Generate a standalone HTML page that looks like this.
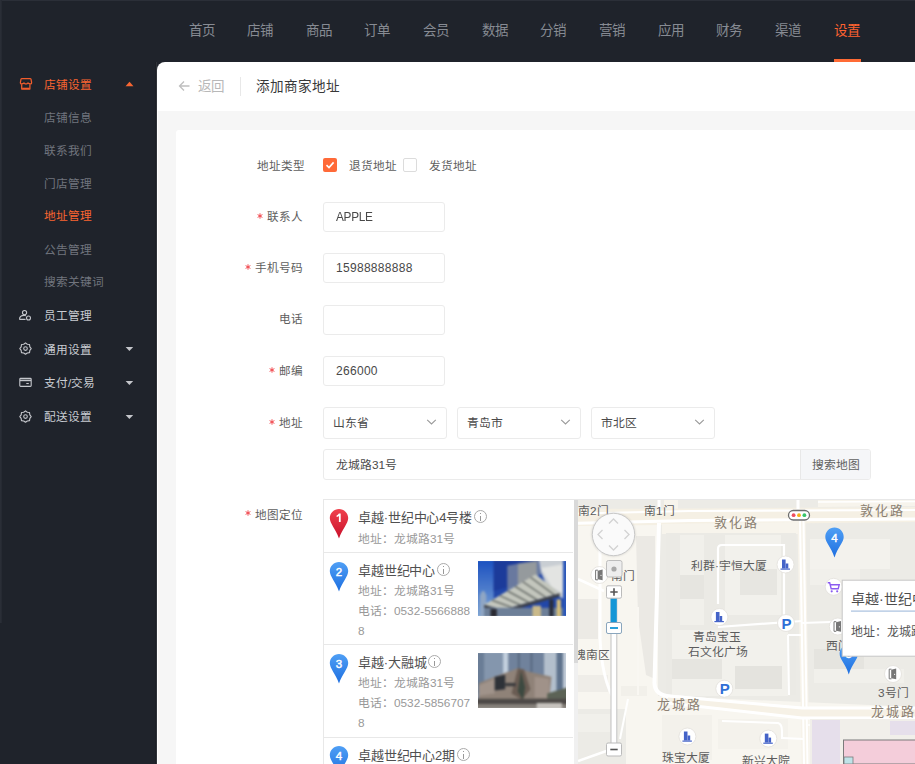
<!DOCTYPE html>
<html lang="zh-CN"><head><meta charset="utf-8">
<style>
*{margin:0;padding:0;box-sizing:border-box}
html,body{width:915px;height:764px;overflow:hidden;background:#1f232b;font-family:"Liberation Sans",sans-serif;}
.abs{position:absolute}
#top{position:absolute;left:0;top:0;width:915px;height:62px;background:#1f232b}
.nav{position:absolute;top:22px;font-size:13.5px;line-height:18px;color:#878b93;white-space:nowrap}
.nav.on{color:#fd6230;font-weight:500}
#ul{position:absolute;left:834px;top:59px;width:27px;height:3px;background:#ff6b35}

.m{position:absolute;left:44px;font-size:11.7px;line-height:16px;white-space:nowrap}
.m1{color:#c9ccd2}
.m2{color:#71757e}
.on2{color:#fa6531;font-weight:500}
#panel{position:absolute;left:157px;top:62px;width:760px;height:710px;background:#fff;border-top-left-radius:8px;overflow:hidden}
#gray{position:absolute;left:1px;top:49px;width:760px;height:700px;background:#f6f6f6}
#card{position:absolute;left:19px;top:68px;width:760px;height:700px;background:#fff}
.lbl{position:absolute;font-size:11.6px;line-height:16px;color:#5e5e5e;margin-top:1px;white-space:nowrap;text-align:right}
.req{display:inline-block;margin-right:4px;vertical-align:2.5px}
.inp{position:absolute;left:323px;width:122px;height:30px;border:1px solid #ebebeb;border-radius:3px;background:#fff;font-size:12px;letter-spacing:0.3px;color:#484848;padding-left:12px;line-height:29px}
.sel{position:absolute;top:407px;width:124px;height:32px;border:1px solid #ebebeb;border-radius:3px;background:#fff;font-size:11.8px;color:#4a4a4a;padding-left:9px;line-height:31px}
.t1{position:absolute;left:358px;font-size:13px;line-height:18px;color:#505050;letter-spacing:-0.15px;white-space:nowrap}
.t2{position:absolute;left:358px;font-size:11.8px;line-height:18px;color:#999;white-space:nowrap}
.info{display:inline-block;width:13px;height:13px;border:1px solid #aaa;border-radius:50%;margin-left:2px;vertical-align:-1px;position:relative;font-style:normal}
.info:before{content:"";position:absolute;left:5px;top:2px;width:1px;height:1.2px;background:#999}
.info:after{content:"";position:absolute;left:5px;top:4.5px;width:1px;height:5px;background:#999}
</style></head><body>
<div id="top"></div>
<div class="abs" style="left:0;top:0;width:915px;height:1px;background:#2b2f38"></div>
<div class="abs" style="left:0;top:0;width:2px;height:623px;background:linear-gradient(90deg,#2c3039,#242830)"></div>
<div class="nav" style="left:189px">首页</div>
<div class="nav" style="left:247px">店铺</div>
<div class="nav" style="left:306px">商品</div>
<div class="nav" style="left:364px">订单</div>
<div class="nav" style="left:423px">会员</div>
<div class="nav" style="left:482px">数据</div>
<div class="nav" style="left:540px">分销</div>
<div class="nav" style="left:599px">营销</div>
<div class="nav" style="left:658px">应用</div>
<div class="nav" style="left:716px">财务</div>
<div class="nav" style="left:775px">渠道</div>
<div class="nav on" style="left:834px">设置</div>
<div id="ul"></div>

<div class="m on2" style="top:77px">店铺设置</div>
<div class="m m2" style="top:109.5px">店铺信息</div>
<div class="m m2" style="top:142.5px">联系我们</div>
<div class="m m2" style="top:175.5px">门店管理</div>
<div class="m on2" style="top:208px">地址管理</div>
<div class="m m2" style="top:241.5px">公告管理</div>
<div class="m m2" style="top:274px">搜索关键词</div>
<div class="m m1" style="top:308px">员工管理</div>
<div class="m m1" style="top:342px">通用设置</div>
<div class="m m1" style="top:375px">支付/交易</div>
<div class="m m1" style="top:409px">配送设置</div>


<!-- sidebar icons -->
<svg class="abs" style="left:16px;top:74px" width="20" height="19" viewBox="0 0 20 19" fill="none" stroke="#f35d2c" stroke-width="1.25" stroke-linejoin="round">
<path d="M6 4.5 H14 Q14.8 4.5 15 5.2 L15.6 8.4 Q15.7 9.9 14.4 9.9 Q13 9.9 12 9 L11.2 9.6 Q10 10.3 8.8 9.6 L8 9 Q7 9.9 5.6 9.9 Q4.3 9.9 4.4 8.4 L5 5.2 Q5.2 4.5 6 4.5Z"/>
<path d="M5.7 10.3 V15 H13.9 V10.3"/><path d="M6.2 14.4 H13.4" stroke-width="1.4"/>
</svg>
<svg class="abs" style="left:124px;top:81px" width="11" height="7" viewBox="0 0 11 7"><path d="M1.5 5.3 L5.5 0.8 L9.5 5.3Z" fill="#f76632"/></svg>
<svg class="abs" style="left:15px;top:305px" width="22" height="20" viewBox="0 0 22 20" fill="none" stroke="#c4c6cb" stroke-width="1.1">
<circle cx="9.55" cy="7.6" r="2.1"/><path d="M4.5 14.4 H10.6 M4.5 14.4 C4.5 12 6.4 10.4 9.2 10.4 C9.8 10.4 10.4 10.5 10.9 10.7"/><circle cx="13.5" cy="13" r="2"/>
</svg>
<svg class="abs" style="left:15px;top:338px" width="22" height="20" viewBox="0 0 22 20" fill="none" stroke="#c4c6cb" stroke-width="1.1" stroke-linejoin="round">
<path d="M10.50 4.90 L12.30 6.26 L14.53 6.57 L14.84 8.80 L16.20 10.60 L14.84 12.40 L14.53 14.63 L12.30 14.94 L10.50 16.30 L8.70 14.94 L6.47 14.63 L6.16 12.40 L4.80 10.60 L6.16 8.80 L6.47 6.57 L8.70 6.26Z"/><circle cx="10.5" cy="10.6" r="1.8"/>
</svg>
<svg class="abs" style="left:15px;top:372px" width="22" height="20" viewBox="0 0 22 20" fill="none" stroke="#c4c6cb" stroke-width="1.1">
<rect x="4.8" y="6.4" width="11.4" height="8" rx="0.8"/><path d="M5 8.4 H16" stroke-width="1.6"/><path d="M11.3 11.5 H13.8"/>
</svg>
<svg class="abs" style="left:15px;top:406px" width="22" height="20" viewBox="0 0 22 20" fill="none" stroke="#c4c6cb" stroke-width="1.1" stroke-linejoin="round">
<path d="M10.50 4.90 L12.30 6.26 L14.53 6.57 L14.84 8.80 L16.20 10.60 L14.84 12.40 L14.53 14.63 L12.30 14.94 L10.50 16.30 L8.70 14.94 L6.47 14.63 L6.16 12.40 L4.80 10.60 L6.16 8.80 L6.47 6.57 L8.70 6.26Z"/><circle cx="10.5" cy="10.6" r="1.8"/>
</svg>
<svg class="abs" style="left:124px;top:346px" width="10" height="6" viewBox="0 0 10 6"><path d="M1.6 0.9 H9.2 L5.4 5.1Z" fill="#c4c6cb"/></svg>
<svg class="abs" style="left:124px;top:380px" width="10" height="6" viewBox="0 0 10 6"><path d="M1.6 0.9 H9.2 L5.4 5.1Z" fill="#c4c6cb"/></svg>
<svg class="abs" style="left:124px;top:414px" width="10" height="6" viewBox="0 0 10 6"><path d="M1.6 0.9 H9.2 L5.4 5.1Z" fill="#c4c6cb"/></svg>
<div class="abs" style="left:155px;top:62px;width:2px;height:702px;background:linear-gradient(90deg,#12151b,#3a3d44)"></div>
<div id="panel">
  <div id="gray"></div>
</div>
<div class="abs" style="left:176px;top:130px;width:739px;height:634px;background:#fff;border-top-left-radius:3px"></div>


<!-- page header -->
<svg class="abs" style="left:177px;top:79px" width="14" height="14" viewBox="0 0 14 14"><path d="M12.5 7H2.5M7 2.5L2.5 7L7 11.5" fill="none" stroke="#bfbfbf" stroke-width="1.3"/></svg>
<div class="abs" style="left:198px;top:78px;font-size:13.5px;line-height:18px;color:#b8b8b8">返回</div>
<div class="abs" style="left:240px;top:77px;width:1px;height:19px;background:#e8e8e8"></div>
<div class="abs" style="left:256px;top:78px;font-size:13.6px;line-height:18px;color:#383838">添加商家地址</div>

<!-- form -->
<div class="lbl" style="left:257px;top:157px">地址类型</div>
<div class="abs" style="left:323px;top:158px;width:14px;height:14px;background:#ff6a38;border-radius:2px"></div>
<svg class="abs" style="left:323px;top:158px" width="14" height="14" viewBox="0 0 14 14"><path d="M3.5 7.2L6 9.6L10.6 4.4" fill="none" stroke="#fff" stroke-width="1.6"/></svg>
<div class="lbl" style="left:349px;top:157px">退货地址</div>
<div class="abs" style="left:403px;top:158px;width:14px;height:14px;border:1px solid #dcdcdc;border-radius:2px;background:#fff"></div>
<div class="lbl" style="left:429px;top:157px">发货地址</div>

<div class="lbl" style="right:612px;top:208px"><svg class="req" width="6" height="6" viewBox="0 0 6 6"><path d="M3 0.3V5.7M0.6 1.6L5.4 4.4M0.6 4.4L5.4 1.6" stroke="#f0434a" stroke-width="0.95"/></svg>联系人</div>
<div class="inp" style="top:202px"><span style="display:inline-block;font-size:12.3px;letter-spacing:-0.3px;transform:scaleX(0.96);transform-origin:0 50%">APPLE</span></div>
<div class="lbl" style="right:612px;top:259px"><svg class="req" width="6" height="6" viewBox="0 0 6 6"><path d="M3 0.3V5.7M0.6 1.6L5.4 4.4M0.6 4.4L5.4 1.6" stroke="#f0434a" stroke-width="0.95"/></svg>手机号码</div>
<div class="inp" style="top:253px">15988888888</div>
<div class="lbl" style="right:612px;top:310px">电话</div>
<div class="inp" style="top:305px"></div>
<div class="lbl" style="right:612px;top:362px"><svg class="req" width="6" height="6" viewBox="0 0 6 6"><path d="M3 0.3V5.7M0.6 1.6L5.4 4.4M0.6 4.4L5.4 1.6" stroke="#f0434a" stroke-width="0.95"/></svg>邮编</div>
<div class="inp" style="top:356px">266000</div>
<div class="lbl" style="right:612px;top:414px"><svg class="req" width="6" height="6" viewBox="0 0 6 6"><path d="M3 0.3V5.7M0.6 1.6L5.4 4.4M0.6 4.4L5.4 1.6" stroke="#f0434a" stroke-width="0.95"/></svg>地址</div>
<div class="sel" style="left:323px">山东省</div>
<div class="sel" style="left:457px">青岛市</div>
<div class="sel" style="left:591px">市北区</div>
<svg class="abs" style="left:426px;top:418px" width="11" height="8" viewBox="0 0 11 8"><path d="M1.2 1.8L5.5 6L9.8 1.8" fill="none" stroke="#9a9a9a" stroke-width="1.1"/></svg>
<svg class="abs" style="left:560px;top:418px" width="11" height="8" viewBox="0 0 11 8"><path d="M1.2 1.8L5.5 6L9.8 1.8" fill="none" stroke="#9a9a9a" stroke-width="1.1"/></svg>
<svg class="abs" style="left:694px;top:418px" width="11" height="8" viewBox="0 0 11 8"><path d="M1.2 1.8L5.5 6L9.8 1.8" fill="none" stroke="#9a9a9a" stroke-width="1.1"/></svg>
<div class="abs" style="left:323px;top:449px;width:548px;height:31px;border:1px solid #ebebeb;border-radius:3px;background:#fff;overflow:hidden">
  <div class="abs" style="left:12px;top:0;font-size:11.8px;line-height:30px;color:#4a4a4a">龙城路31号</div>
  <div class="abs" style="left:476px;top:0;width:71px;height:29px;background:#f5f6f8;border-left:1px solid #e8e8e8;font-size:11.8px;line-height:30px;color:#606060;text-align:center">搜索地图</div>
</div>
<div class="lbl" style="right:612px;top:505.5px"><svg class="req" width="6" height="6" viewBox="0 0 6 6"><path d="M3 0.3V5.7M0.6 1.6L5.4 4.4M0.6 4.4L5.4 1.6" stroke="#f0434a" stroke-width="0.95"/></svg>地图定位</div>

<!-- map list -->
<div class="abs" style="left:323px;top:499px;width:592px;height:265px;border-top:1px solid #e8e8e8;border-left:1px solid #e8e8e8;background:#fff;overflow:hidden">
</div>
<div class="abs" style="left:324px;top:552px;width:249px;height:1px;background:#e8e8e8"></div>
<div class="abs" style="left:324px;top:644px;width:249px;height:1px;background:#e8e8e8"></div>
<div class="abs" style="left:324px;top:737px;width:249px;height:1px;background:#e8e8e8"></div>
<div class="abs" style="left:574px;top:500px;width:4px;height:264px;background:#f0f0f0"></div>
<div class="abs" style="left:574px;top:500px;width:4px;height:163px;background:#d9d9d9"></div>
<svg class="abs" style="left:328px;top:508px" width="22" height="32" viewBox="0 0 22 32">
<defs><linearGradient id="gr" x1="0" y1="0" x2="0" y2="1"><stop offset="0" stop-color="#f0414d"/><stop offset="1" stop-color="#c8102a"/></linearGradient>
<linearGradient id="gb" x1="0" y1="0" x2="0" y2="1"><stop offset="0" stop-color="#4f9ff5"/><stop offset="1" stop-color="#1e6fe0"/></linearGradient></defs>
<path d="M11 1C6 1 1.8 5 1.8 10C1.8 15.6 7.6 20.6 11 30.6C14.4 20.6 20.2 15.6 20.2 10C20.2 5 16 1 11 1Z" fill="url(#gr)"/>
<path d="M10.9 5.6 H12.7 V14 H10.9 V8 Q9.8 8.9 8.6 9.1 V7.5 Q10 7 10.9 5.6Z" fill="#fff"/></svg>
<svg class="abs" style="left:328px;top:561px" width="22" height="32" viewBox="0 0 22 32">
<path d="M11 1C6 1 1.8 5 1.8 10C1.8 15.6 7.6 20.6 11 30.6C14.4 20.6 20.2 15.6 20.2 10C20.2 5 16 1 11 1Z" fill="url(#gb)"/>
<text x="11" y="14.6" text-anchor="middle" font-size="11.5" fill="#fff" stroke="#fff" stroke-width="0.45" font-family="Liberation Sans">2</text></svg>
<svg class="abs" style="left:328px;top:653px" width="22" height="32" viewBox="0 0 22 32">
<path d="M11 1C6 1 1.8 5 1.8 10C1.8 15.6 7.6 20.6 11 30.6C14.4 20.6 20.2 15.6 20.2 10C20.2 5 16 1 11 1Z" fill="url(#gb)"/>
<text x="11" y="14.6" text-anchor="middle" font-size="11.5" fill="#fff" stroke="#fff" stroke-width="0.45" font-family="Liberation Sans">3</text></svg>
<svg class="abs" style="left:328px;top:745px" width="22" height="32" viewBox="0 0 22 32">
<path d="M11 1C6 1 1.8 5 1.8 10C1.8 15.6 7.6 20.6 11 30.6C14.4 20.6 20.2 15.6 20.2 10C20.2 5 16 1 11 1Z" fill="url(#gb)"/>
<text x="11" y="14.6" text-anchor="middle" font-size="11.5" fill="#fff" stroke="#fff" stroke-width="0.45" font-family="Liberation Sans">4</text></svg>

<div class="t1" style="top:509px">卓越·世纪中心4号楼<i class="info"></i></div>
<div class="t2" style="top:529.7px">地址：龙城路31号</div>
<div class="t1" style="top:562px">卓越世纪中心<i class="info"></i></div>
<div class="t2" style="top:581.7px">地址：龙城路31号</div>
<div class="t2" style="top:601.7px">电话：0532-5566888</div>
<div class="t2" style="top:621.7px">8</div>
<div class="t1" style="top:654px">卓越·大融城<i class="info"></i></div>
<div class="t2" style="top:673.7px">地址：龙城路31号</div>
<div class="t2" style="top:693.7px">电话：0532-5856707</div>
<div class="t2" style="top:713.7px">8</div>
<div class="t1" style="top:747px">卓越世纪中心2期<i class="info"></i></div>
<div id="img1" class="abs" style="left:478px;top:561px;width:88px;height:55px;overflow:hidden"><div style="filter:blur(0.8px);transform:scale(1.05);transform-origin:50% 50%"><svg width="88" height="55" viewBox="0 0 88 55">
<defs><linearGradient id="sky1" x1="0" y1="0" x2="0" y2="1"><stop offset="0" stop-color="#1a50c0"/><stop offset="1" stop-color="#7ea6d6"/></linearGradient>
<filter id="bl1"><feGaussianBlur stdDeviation="0.7"/></filter></defs>
<g filter="url(#bl1)">
<rect width="88" height="55" fill="#2447a8"/>
<rect x="0" y="0" width="17" height="55" fill="url(#sky1)"/>
<path d="M4 55 L4 34 L6 30 L8 30 L10 34 L10 55Z" fill="#8fa6c4"/>
<path d="M17 0 L60 0 L55 20 L17 30Z" fill="#1c3a9a"/>
<path d="M30 6 L60 0 L62 14 L30 30Z" fill="#7d8aa0" opacity="0.8"/><path d="M40 4 L58 2 L58 16 L40 24Z" fill="#a8a89c" opacity="0.7"/>
<path d="M60 0 L88 0 L88 40 L70 30 L62 12Z" fill="#c9ced3"/>
<path d="M62 8 L86 4 L86 34 L72 26Z" fill="#e3e4e2"/>
<path d="M83 0 L88 0 L88 55 L83 55Z" fill="#2a56b8"/>
<path d="M8 43 L57 14 L80 32 L26 48Z" fill="#c3c6bd"/>
<g stroke="#5f6460" stroke-width="1.2"><path d="M15.3 38.6 L34.1 45.6"/><path d="M22.7 34.3 L42.2 43.2"/><path d="M30.1 29.9 L50.3 40.8"/><path d="M37.4 25.6 L58.4 38.4"/><path d="M44.8 21.2 L66.5 36.0"/><path d="M52.1 16.9 L74.6 33.6"/></g>
<path d="M8 43 L26 48 L80 32 L80 35 L26 51 L8 46Z" fill="#3d3f45"/>
<rect x="8" y="46" width="75" height="9" fill="#6d7f98"/>
<rect x="14" y="47" width="6" height="8" fill="#2b2b30"/>
<rect x="54" y="44" width="8" height="11" fill="#c9b98a"/>
<rect x="70" y="38" width="4" height="17" fill="#2a2f3a"/>
<rect x="77" y="38" width="4" height="17" fill="#d7c07a"/>
</g></svg></div></div>
<div id="img2" class="abs" style="left:478px;top:653px;width:88px;height:55px;overflow:hidden"><div style="filter:blur(0.8px);transform:scale(1.05);transform-origin:50% 50%"><svg width="88" height="55" viewBox="0 0 88 55">
<defs><filter id="bl2"><feGaussianBlur stdDeviation="0.6"/></filter></defs>
<g filter="url(#bl2)">
<rect width="88" height="55" fill="#7e8ea3"/>
<rect x="0" y="0" width="8" height="40" fill="#6a7d96"/>
<rect x="8" y="0" width="18" height="30" fill="#8496ad"/>
<rect x="26" y="0" width="5" height="24" fill="#c3d0de"/>
<rect x="31" y="0" width="34" height="22" fill="#6f829c"/>
<rect x="40" y="0" width="2" height="20" fill="#5a6b82"/>
<rect x="52" y="0" width="2" height="20" fill="#5a6b82"/>
<rect x="65" y="0" width="12" height="42" fill="#b3bfcc"/>
<rect x="77" y="0" width="6" height="40" fill="#5f738d"/>
<rect x="83" y="0" width="5" height="40" fill="#c0cad6"/>
<path d="M3 30 L18 24 L40 16 L50 19 L72 24 L70 46 L3 48Z" fill="#8f8278"/>
<path d="M3 32 L18 26 L18 40 L3 42Z" fill="#a0938a"/>
<path d="M18 24 L28 22 L28 36 L18 37Z" fill="#2f3038"/>
<path d="M40 16 L46 17 L52 36 L44 46 L34 40Z" fill="#6a5c52"/>
<path d="M43 18 L47 34 L45 46 L40 38Z" fill="#3e4a40"/>
<path d="M56 24 L70 26 L70 44 L56 44Z" fill="#a09289"/>
<rect x="28" y="30" width="10" height="3" fill="#3a3a3e"/>
<path d="M68 40 L88 34 L88 50 L68 50Z" fill="#5c6356"/>
<rect x="0" y="45" width="88" height="6" fill="#4d4a47"/>
<rect x="0" y="50" width="88" height="5" fill="#85807a"/>
<rect x="58" y="49" width="24" height="6" fill="#c6c2bd"/>
</g></svg></div></div>
<div id="map" class="abs" style="left:578px;top:500px;width:337px;height:264px;overflow:hidden;background:#f3f1ec"><div style="position:absolute;left:0;top:-1px"><svg width="337" height="265" viewBox="0 0 337 265" font-family="Liberation Sans, sans-serif">
<defs><linearGradient id="mb" x1="0" y1="0" x2="0" y2="1"><stop offset="0" stop-color="#4f9ff5"/><stop offset="1" stop-color="#1e6fe0"/></linearGradient><filter id="sh" x="-20%" y="-20%" width="140%" height="140%"><feGaussianBlur stdDeviation="0.8"/></filter></defs><!-- base -->
<rect width="337" height="265" fill="#ecebe6"/>
<!-- cream areas -->
<path d="M0 22 L80 20 L80 265 L0 265Z" fill="#f8f6f0"/>
<path d="M60 196 L337 208 L337 265 L60 265Z" fill="#f8f6f0"/>
<!-- gray tapered block left of road -->
<path d="M58 37 L77 37 L77 180 L68 176 L60 120Z" fill="#ebe9e4"/>

<path d="M0 100 L20 100 L20 140 L0 140Z" fill="#eceae5"/>
<path d="M0 210 L48 210 L48 265 L0 265Z" fill="#ecebe6"/><rect x="0" y="215" width="32" height="18" fill="#f1f0eb"/><rect x="43" y="187" width="26" height="10" fill="#f2f0ea"/><rect x="0" y="176" width="30" height="17" fill="#efede8"/>

<!-- top block -->
<rect x="0" y="0" width="337" height="12" fill="#ecebe6"/>
<rect x="86" y="0" width="14" height="10" fill="#f7f4ec"/>
<path d="M240 0 L337 0 L337 7 L240 8Z" fill="#f7f4ec"/>
<!-- 敦化路 band -->
<path d="M0 10 L112 9.5 L337 8 L337 23 L0 27Z" fill="#f5f0e4"/>
<path d="M0 14.5 L112 12 L337 11" fill="none" stroke="#fff" stroke-width="2.2"/>
<path d="M0 24.3 L112 21.6 L337 20" fill="none" stroke="#fff" stroke-width="3"/>
<path d="M240 3 L337 2.5" stroke="#fff" stroke-width="1.3"/>
<path d="M81 0 L81 11 M220 0 L220 10" stroke="#fff" stroke-width="3"/>
<path d="M84 25 L220 23 L220 35 L84 35Z" fill="#f7f4ec"/>
<!-- central block lighter areas -->
<rect x="88" y="34" width="130" height="162" fill="#ebeae5"/>
<rect x="102" y="36" width="24" height="90" fill="#f1f0eb"/>
<rect x="102" y="76" width="24" height="24" fill="#e6e5e0"/>
<rect x="147" y="36" width="56" height="80" fill="#f2f1ec"/>
<rect x="162" y="70" width="37" height="26" fill="#e7e6e1"/>
<rect x="94" y="131" width="116" height="66" fill="#f2f1ec"/>
<rect x="94" y="160" width="50" height="20" fill="#e6e5e0"/>
<rect x="157" y="167" width="47" height="23" fill="#e4e3de"/>
<!-- right block lighter -->
<rect x="232" y="40" width="80" height="30" fill="#f3f2ed"/>
<rect x="232" y="70" width="50" height="16" fill="#f1f0eb"/>
<rect x="236" y="150" width="50" height="20" fill="#e5e4df"/>
<rect x="236" y="170" width="90" height="14" fill="#f1f0eb"/>
<!-- vertical roads -->
<path d="M81 24 L76.5 183 Q76 196 92 197.5 L224 210" fill="none" stroke="#fff" stroke-width="4"/>
<path d="M223.5 22 L227.5 265" stroke="#f7f3ea" stroke-width="8"/>
<path d="M222 22 L226 265" stroke="#fff" stroke-width="2"/><path d="M225.5 22 L229.5 265" stroke="#fff" stroke-width="2"/>
<path d="M22 26 L22 140 Q24 180 36 200" fill="none" stroke="#fff" stroke-width="3"/>
<path d="M0 80 L26 92" stroke="#fff" stroke-width="2.5"/>
<path d="M50 200 L42 240" stroke="#fff" stroke-width="2"/>
<path d="M0 262 L34 250" stroke="#fff" stroke-width="2.5"/>
<!-- inner roads -->
<path d="M140 105 L140 50 Q140 46 144 46 L206 46 L206 116" fill="none" stroke="#fff" stroke-width="2.2"/>
<path d="M140 128 L224 122" stroke="#fff" stroke-width="2.2"/>
<path d="M205 118 L208 130" stroke="#fff" stroke-width="2"/>
<path d="M210 136 L211 196" stroke="#fff" stroke-width="2"/><path d="M210 136 L224 136" stroke="#fff" stroke-width="2"/>
<path d="M224 124 L337 120" stroke="#fff" stroke-width="1.8"/>
<path d="M60 108 L60 196" stroke="#f9f7f2" stroke-width="2"/>
<!-- 龙城路 band -->
<path d="M90 196 L224 208 L337 208 L337 220 L224 220 L90 204Z" fill="#f6f1e6"/>
<path d="M90 197 L224 209 L337 209" fill="none" stroke="#fff" stroke-width="3"/>
<path d="M90 204 L224 219 L337 219" fill="none" stroke="#fff" stroke-width="3"/>
<!-- lower blocks -->
<rect x="84" y="216" width="50" height="45" fill="#f3f1eb"/>
<rect x="140" y="220" width="70" height="30" fill="#f4f2ec"/>
<path d="M144 222 L200 224 Q204 225 204 232 L204 240" fill="none" stroke="#fff" stroke-width="2"/>
<path d="M204 239 L226 240" stroke="#fff" stroke-width="2"/>
<path d="M230 226 L337 226" stroke="#fff" stroke-width="1.5"/>
<!-- bottom right colored -->
<rect x="232" y="220" width="105" height="45" fill="#f1efea"/>
<rect x="234" y="221" width="28" height="44" fill="#e6dfeb"/>
<rect x="312" y="222" width="25" height="14" fill="#e6dfeb"/>
<rect x="265.5" y="241" width="72" height="24" fill="#f4cdda" stroke="#7b7b7b" stroke-width="1"/>
<rect x="266" y="258" width="9" height="7" fill="#bfe3e8" stroke="#7b7b7b" stroke-width="0.8"/>
<!-- labels -->
<g fill="#5c5c5c" font-size="11.8">
<text x="0" y="15.5">南2门</text>
<text x="66" y="16">南1门</text>
<text x="113" y="71">利群·宇恒大厦</text>
<text x="115" y="142">青岛宝玉</text>
<text x="110" y="157">石文化广场</text>
<text x="-4" y="160">槐南区</text>
<text x="33" y="80.5">南门</text>
<text x="248" y="151">西门</text>
<text x="300" y="198">3号门</text>
<text x="84" y="263">珠宝大厦</text>
<text x="164" y="266">新兴大院</text>
</g>
<g fill="#8b7f72" font-size="13" letter-spacing="2">
<text x="136" y="28">敦化路</text>
<text x="282" y="16">敦化路</text>
<text x="79" y="210" >龙城路</text>
<text x="293" y="217">龙城路</text>
</g>
<circle cx="207.5" cy="65.5" r="8.5" fill="#fff" stroke="#e2e0da" stroke-width="0.8"/><g fill="#4463c8"><rect x="204.0" y="60.5" width="3.6" height="9"/><rect x="207.7" y="64.5" width="2.6" height="5"/><rect x="202.5" y="69.5" width="9.5" height="1.2"/></g><circle cx="141.4" cy="118" r="8.5" fill="#fff" stroke="#e2e0da" stroke-width="0.8"/><g fill="#4463c8"><rect x="137.9" y="113" width="3.6" height="9"/><rect x="141.6" y="117" width="2.6" height="5"/><rect x="136.4" y="122" width="9.5" height="1.2"/></g><circle cx="109.4" cy="237.5" r="8.5" fill="#fff" stroke="#e2e0da" stroke-width="0.8"/><g fill="#4463c8"><rect x="105.9" y="232.5" width="3.6" height="9"/><rect x="109.60000000000001" y="236.5" width="2.6" height="5"/><rect x="104.4" y="241.5" width="9.5" height="1.2"/></g><circle cx="190.3" cy="239.6" r="8.5" fill="#fff" stroke="#e2e0da" stroke-width="0.8"/><g fill="#4463c8"><rect x="186.8" y="234.6" width="3.6" height="9"/><rect x="190.5" y="238.6" width="2.6" height="5"/><rect x="185.3" y="243.6" width="9.5" height="1.2"/></g><circle cx="208" cy="124" r="8.5" fill="#fff" stroke="#e2e0da" stroke-width="0.8"/><text x="203.5" y="129.5" font-size="15" font-weight="bold" fill="#2f6fd6">P</text><circle cx="146.3" cy="189.7" r="8.5" fill="#fff" stroke="#e2e0da" stroke-width="0.8"/><text x="141.8" y="195.2" font-size="15" font-weight="bold" fill="#2f6fd6">P</text><circle cx="21.4" cy="76" r="8.5" fill="#fff" stroke="#e2e0da" stroke-width="0.8"/><path d="M19.9 71.2 H17.599999999999998 V80.8 H19.9" fill="none" stroke="#777" stroke-width="1"/><path d="M19.599999999999998 71.8 L24.599999999999998 70.6 V81.2 L19.599999999999998 80.2Z" fill="#777"/><circle cx="23.0" cy="76.3" r="0.6" fill="#fff"/><circle cx="259.8" cy="127.5" r="8.5" fill="#fff" stroke="#e2e0da" stroke-width="0.8"/><path d="M258.3 122.7 H256.0 V132.3 H258.3" fill="none" stroke="#777" stroke-width="1"/><path d="M258.0 123.3 L263.0 122.1 V132.7 L258.0 131.7Z" fill="#777"/><circle cx="261.40000000000003" cy="127.8" r="0.6" fill="#fff"/><circle cx="315" cy="175" r="8.5" fill="#fff" stroke="#e2e0da" stroke-width="0.8"/><path d="M313.5 170.2 H311.2 V179.8 H313.5" fill="none" stroke="#777" stroke-width="1"/><path d="M313.2 170.8 L318.2 169.6 V180.2 L313.2 179.2Z" fill="#777"/><circle cx="316.6" cy="175.3" r="0.6" fill="#fff"/><circle cx="255.7" cy="87.8" r="8.5" fill="#fff" stroke="#e2e0da" stroke-width="0.8"/><g fill="none" stroke="#8b5cf0" stroke-width="1.4"><path d="M249.7 83.8 L251.7 83.8 L253.2 89.8 L260.2 89.8 L261.2 85.8 L252.7 85.8"/></g><circle cx="253.7" cy="92.3" r="1.1" fill="#8b5cf0"/><circle cx="259.2" cy="92.3" r="1.1" fill="#8b5cf0"/><rect x="210.5" y="11.5" width="21" height="9.5" rx="4.75" fill="#fff" stroke="#6d6d6d" stroke-width="1.3"/><circle cx="215.6" cy="16.2" r="1.9" fill="#ef4f5f"/><circle cx="221" cy="16.2" r="1.9" fill="#f6b21a"/><circle cx="226.4" cy="16.2" r="1.9" fill="#3ac46a"/><path d="M256.5 28.5 C251.3 28.5 247.3 32.7 247.3 37.9 C247.3 43.5 253.0 47.5 256.5 58.5 C260.0 47.5 265.7 43.5 265.7 37.9 C265.7 32.7 261.7 28.5 256.5 28.5Z" fill="url(#mb)"/><text x="256.5" y="42.5" text-anchor="middle" font-size="11.5" fill="#fff" stroke="#fff" stroke-width="0.45">4</text><path d="M270.8 145.4 C265.6 145.4 261.6 149.6 261.6 154.8 C261.6 160.4 267.3 164.4 270.8 175.4 C274.3 164.4 280.0 160.4 280.0 154.8 C280.0 149.6 276.0 145.4 270.8 145.4Z" fill="url(#mb)"/><text x="270.8" y="159.4" text-anchor="middle" font-size="11.5" fill="#fff" stroke="#fff" stroke-width="0.45">5</text><rect x="264.2" y="81.2" width="90" height="76" fill="#fff" stroke="#c6c6c6" stroke-width="1"/><text x="273" y="105" font-size="14" fill="#4d4d4d">卓越·世纪中心</text><rect x="273" y="111.5" width="70" height="1.2" fill="#a9c0de"/><text x="273" y="137" font-size="12" fill="#555">地址：龙城路31号</text><circle cx="35.5" cy="35.5" r="22" fill="#000" opacity="0.12" filter="url(#sh)"/>
<circle cx="35.5" cy="35.5" r="21.2" fill="#fafafa" stroke="#c9c9c9" stroke-width="1"/>
<g fill="none" stroke="#d2d2d2" stroke-width="1.3"><path d="M31 24.5 L35.5 20 L40 24.5"/><path d="M31 46.5 L35.5 51 L40 46.5"/><path d="M24.5 31 L20 35.5 L24.5 40"/><path d="M46.5 31 L51 35.5 L46.5 40"/></g>
<rect x="28.5" y="61.5" width="15.5" height="16.5" rx="2" fill="#eeeeee" stroke="#bdbdbd" stroke-width="1"/>
<circle cx="36" cy="70" r="2.6" fill="#a9a9a9"/>
<rect x="33" y="99" width="5.8" height="146" fill="#fff" stroke="#c2c2c2" stroke-width="1"/>
<rect x="32.6" y="99" width="6.2" height="25" fill="#1496d6"/>
<rect x="28.5" y="86.8" width="15" height="12.4" rx="1.5" fill="#fff" stroke="#bbb" stroke-width="1"/>
<path d="M32.3 93 H39.7 M36 89.3 V96.7" stroke="#555" stroke-width="1.6"/>
<rect x="28.5" y="123.5" width="15" height="11" rx="1.5" fill="#fff" stroke="#8aa6bd" stroke-width="1"/>
<path d="M32 129 H40" stroke="#1496d6" stroke-width="1.8"/>
<rect x="28.5" y="244" width="15" height="13" rx="1.5" fill="#fff" stroke="#bbb" stroke-width="1"/>
<path d="M32.3 250.5 H39.7" stroke="#555" stroke-width="1.6"/></svg></div>
</div>
</body></html>
